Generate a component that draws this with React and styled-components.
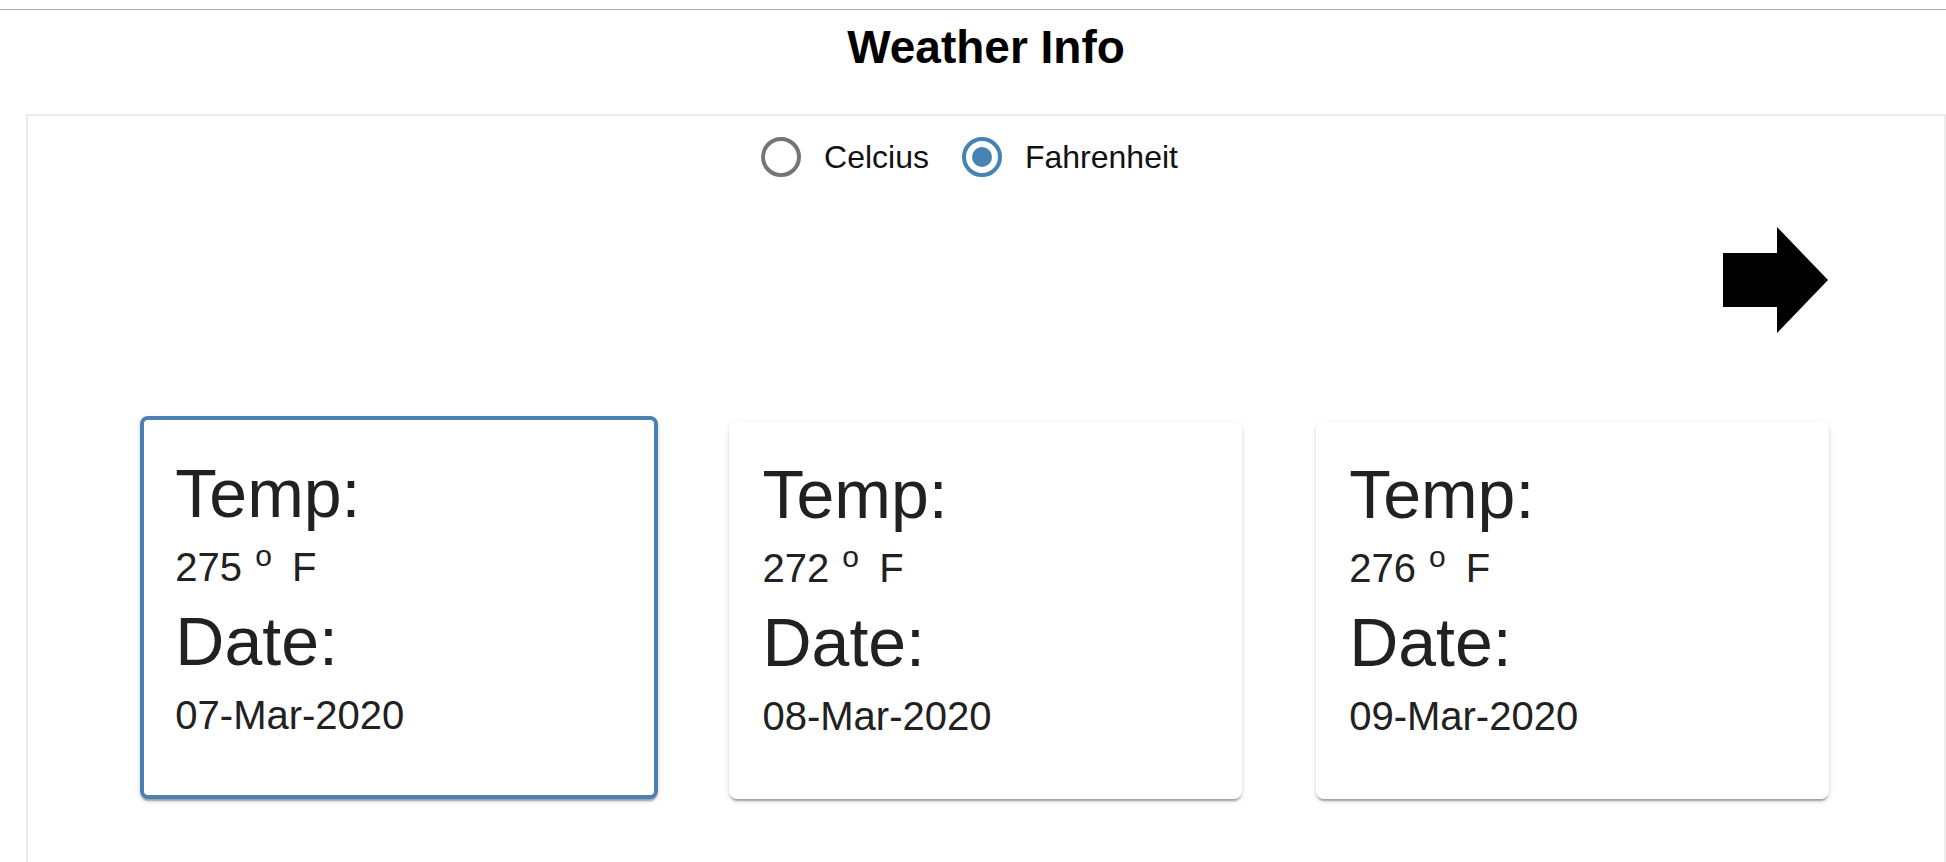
import React, { useState } from "react";
import styled, { createGlobalStyle } from "styled-components";

const GlobalStyle = createGlobalStyle`
  html, body {
    margin: 0;
    padding: 0;
    background: #fff;
    overflow: hidden;
    font-family: "Liberation Sans", Arial, sans-serif;
  }
`;

const Root = styled.div`
  display: flex;
  flex-direction: column;
  padding-left: 26px;
`;

const TopRule = styled.div`
  height: 1px;
  margin: 9px 0 0 -26px;
  background: #adadad;
`;

const Title = styled.h1`
  margin: 10px 0 0;
  font-size: 46px;
  line-height: 55px;
  font-weight: 700;
  text-align: center;
  color: #000;
`;

const Panel = styled.div`
  margin-top: 39px;
  border: 2px solid #ececec;
  padding: 0 78px 120px;
  display: flex;
  flex-direction: column;
`;

const RadioRow = styled.div`
  height: 82px;
  display: flex;
  align-items: center;
  justify-content: center;
`;

const RadioLabel = styled.label`
  display: flex;
  align-items: center;
  gap: 23px;
  margin-right: 33px;
  font-size: 32px;
  color: #111;
  cursor: pointer;
`;

const RadioCircle = styled.span`
  box-sizing: border-box;
  width: 40px;
  height: 40px;
  border-radius: 50%;
  border: 4px solid ${p => (p.checked ? "#4682b4" : "#757575")};
  display: flex;
  align-items: center;
  justify-content: center;

  &::after {
    content: "";
    width: 20px;
    height: 20px;
    border-radius: 50%;
    background: #4682b4;
    display: ${p => (p.checked ? "block" : "none")};
  }
`;

const ArrowRow = styled.div`
  display: flex;
  justify-content: flex-end;
  margin-top: 29px;
  padding-right: 38px;
`;

const ArrowButton = styled.button`
  border: 0;
  padding: 0;
  background: none;
  line-height: 0;
  cursor: pointer;
`;

const CardGrid = styled.div`
  margin-top: 83px;
  display: grid;
  grid-template-columns: repeat(3, 1fr);
  justify-items: center;
  align-items: end;
`;

const Card = styled.div`
  box-sizing: border-box;
  width: ${p => (p.selected ? "518px" : "513px")};
  height: ${p => (p.selected ? "383px" : "377px")};
  padding: ${p => (p.selected ? "31px 31px" : "30px 33px")};
  border: ${p => (p.selected ? "4px solid #4a80b3" : "0")};
  border-radius: 8px;
  background: #fff;
  color: #212121;
  box-shadow: 0 4px 2px -2px rgba(0, 0, 0, 0.2), 0 2px 2px 0 rgba(0, 0, 0, 0.14),
    0 2px 6px 0 rgba(0, 0, 0, 0.12);
  cursor: pointer;
`;

const Label = styled.div`
  font-size: 68px;
  line-height: 84px;
`;

const Value = styled.div`
  font-size: 40px;
  line-height: 64px;
`;

// degree mark is a raised small "o", like <sup>o</sup>
const Degree = styled.span`
  font-size: 30px;
  vertical-align: 15px;
  line-height: 0;
  margin: 0 9px 0 2px;
`;

const days = [
  { temp: 275, date: "07-Mar-2020" },
  { temp: 272, date: "08-Mar-2020" },
  { temp: 276, date: "09-Mar-2020" },
];

const App = () => {
  const [unit, setUnit] = useState("F");
  const [selected, setSelected] = useState(0);

  return (
    <Root>
      <GlobalStyle />
      <TopRule />
      <Title>Weather Info</Title>
      <Panel>
        <RadioRow>
          <RadioLabel onClick={() => setUnit("C")}>
            <RadioCircle checked={unit === "C"} />
            Celcius
          </RadioLabel>
          <RadioLabel onClick={() => setUnit("F")}>
            <RadioCircle checked={unit === "F"} />
            Fahrenheit
          </RadioLabel>
        </RadioRow>

        <ArrowRow>
          <ArrowButton aria-label="next">
            <svg width="105" height="106" viewBox="0 0 105 106">
              <polygon points="0,26 54,26 54,0 105,53 54,106 54,80 0,80" fill="#000" />
            </svg>
          </ArrowButton>
        </ArrowRow>

        <CardGrid>
          {days.map((d, i) => (
            <Card key={d.date} selected={i === selected} onClick={() => setSelected(i)}>
              <Label>Temp:</Label>
              <Value>
                {d.temp} <Degree>o</Degree> {unit}
              </Value>
              <Label>Date:</Label>
              <Value>{d.date}</Value>
            </Card>
          ))}
        </CardGrid>
      </Panel>
    </Root>
  );
};

export default App;
